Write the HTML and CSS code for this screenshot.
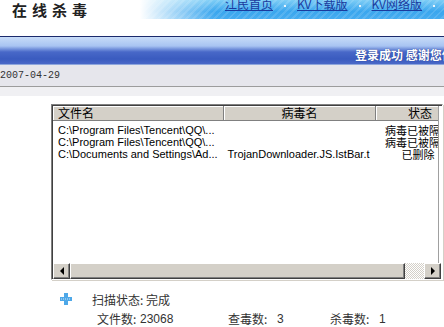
FILE: index.html
```html
<!DOCTYPE html>
<html lang="zh-CN">
<head>
    <meta charset="UTF-8">
    <meta name="viewport" content="width=device-width, initial-scale=1.0">
    <title>在线杀毒</title>
    <link rel="stylesheet" href="styles.css">
</head>
<body>
    <div class="top">
        <div class="logo">在线杀毒</div>
        <div class="nav">
            <a href="#">江民首页</a><span class="dot"></span>
            <a href="#">KV下载版</a><span class="dot"></span>
            <a href="#">KV网络版</a><span class="dot"></span>
        </div>
    </div>
    <div class="bar"><span class="welcome">登录成功 感谢您使用江民在线杀毒</span></div>
    <div class="date">2007-04-29</div>
    <div class="sub"></div>

    <div class="main">
        <div class="list">
            <div class="view">
                <div class="row head">
                    <div class="c1">文件名</div>
                    <div class="c2">病毒名</div>
                    <div class="c3">状态</div>
                </div>
                <div class="rows">
                    <div class="row">
                        <div class="c1">C:\Program Files\Tencent\QQ\...</div>
                        <div class="c2"></div>
                        <div class="c3">病毒已被隔离</div>
                    </div>
                    <div class="row">
                        <div class="c1">C:\Program Files\Tencent\QQ\...</div>
                        <div class="c2"></div>
                        <div class="c3">病毒已被隔离</div>
                    </div>
                    <div class="row">
                        <div class="c1">C:\Documents and Settings\Ad...</div>
                        <div class="c2">TrojanDownloader.JS.IstBar.t</div>
                        <div class="c3">已删除</div>
                    </div>
                </div>
            </div>
            <div class="hscroll">
                <div class="sbtn"><span class="arrow-left"></span></div>
                <div class="thumb"></div>
                <div class="track"></div>
                <div class="sbtn"><span class="arrow-right"></span></div>
            </div>
        </div>

        <div class="status">
            <div class="state">
                <svg class="plus" width="12" height="12" viewBox="0 0 12 12">
                    <path d="M4 0h4v4h4v4H8v4H4V8H0V4h4z" fill="#4ea8e8"/>
                    <path d="M1 6h10" stroke="#cfe6f8" stroke-width="1" stroke-dasharray="1 1"/>
                </svg>
                <span>扫描状态: 完成</span>
            </div>
            <div class="counts">
                <div class="count files"><span class="label">文件数:</span><span class="num">23068</span></div>
                <div class="count checked"><span class="label">查毒数:</span><span class="num">3</span></div>
                <div class="count killed"><span class="label">杀毒数:</span><span class="num">1</span></div>
            </div>
        </div>
    </div>
</body>
</html>
```

FILE: styles.css
```css
body {
    margin: 0;
    overflow: hidden;
    background: #fff;
    font-family: "Liberation Sans", "Noto Sans CJK SC", sans-serif;
    font-size: 12px;
    color: #000;
}

/* header */
.top {
    display: flex;
    height: 36px;
}
.logo {
    padding: 1px 0 0 12px;
    font-family: "Noto Sans CJK SC", sans-serif;
    font-size: 15px;
    font-weight: bold;
    letter-spacing: 5px;
    line-height: 18px;
    color: #222;
}
.nav {
    margin-left: auto;
    flex: none;
    width: 219px;
    height: 19px;
    padding-left: 85px;
    display: flex;
    align-items: flex-start;
    white-space: nowrap;
    overflow: hidden;
    background:
        linear-gradient(to right, #fff 0, rgba(255, 255, 255, 0) 75px),
        repeating-linear-gradient(135deg, rgba(255, 255, 255, 0.12) 0 2px, rgba(255, 255, 255, 0) 2px 5px),
        linear-gradient(to bottom, #7dcdf6, #3aa6ee 60%, #46acf0);
}
.nav a {
    flex: none;
    font-family: "Noto Sans CJK SC", sans-serif;
    font-size: 12px;
    line-height: 12px;
    margin-top: -2px;
    color: #1b3a9e;
    text-decoration: underline;
}
.dot {
    flex: none;
    width: 2px;
    height: 2px;
    margin: 5px 11px 0;
    background: #e8f4fc;
}

/* blue title bar */
.bar {
    height: 27px;
    border-top: 1px solid #1b2a6c;
    border-bottom: 1px solid #8ea6dc;
    background: linear-gradient(to bottom, #c8dcf8 0, #a8c4f2 9px, #7593dc 12px, #4868c8 15px, #3a5bbf 22px, #4a69c8 27px);
    display: flex;
    padding-left: 355px;
    overflow: hidden;
    white-space: nowrap;
}
.welcome {
    font-family: "Noto Sans CJK SC", sans-serif;
    font-weight: bold;
    font-size: 12px;
    line-height: 12px;
    margin-top: 12px;
    color: #fff;
    text-shadow: 0 0 1px #1c2f7a;
}

/* date strip */
.date {
    height: 21px;
    line-height: 22px;
    background: #e6e6ec;
    border-bottom: 1px solid #9c9c9c;
    font-family: "Liberation Mono", monospace;
    font-size: 10px;
    color: #333;
}
.sub {
    height: 9px;
    background: #f0f0f3;
}

/* list view */
.main {
    padding-top: 8px;
}
.list {
    margin-left: 51px;
    width: 389px;
    border-top: 1px solid #808080;
    border-left: 1px solid #808080;
    border-right: 1px solid #fff;
    border-bottom: 1px solid #fff;
    box-shadow: inset 1px 1px 0 #404040, 1px 1px 0 #d4d0c8;
    padding: 1px 0 0 1px;
}
.view {
    height: 157px;
    overflow: hidden;
    border-right: 1px solid #a0a0a0;
    margin-right: 3px;
    background: #fff;
}
.row {
    display: flex;
    height: 12px;
    line-height: 12px;
    white-space: nowrap;
}
.row > div {
    overflow: hidden;
    flex: none;
}
.c1 {
    width: 165px;
    padding-left: 5px;
    font-size: 11px;
}
.c2 {
    width: 151px;
    text-align: center;
    font-size: 11px;
}
.c3 {
    width: 88px;
    text-align: center;
    font-family: "Noto Sans CJK SC", sans-serif;
    font-size: 11px;
}
.row.head {
    height: 14px;
    line-height: 14px;
    background: #d4d0c8;
    border-bottom: 1px solid #808080;
    font-family: "Noto Sans CJK SC", sans-serif;
}
.row.head > div {
    font-size: 12px;
    border-right: 1px solid #808080;
    box-shadow: inset 1px 1px 0 #fff;
}
.rows {
    padding-top: 3px;
}

/* horizontal scrollbar */
.hscroll {
    display: flex;
    height: 16px;
}
.sbtn,
.thumb {
    background: #d4d0c8;
    border-top: 1px solid #fff;
    border-left: 1px solid #fff;
    border-right: 1px solid #404040;
    border-bottom: 1px solid #404040;
    box-shadow: inset -1px -1px 0 #808080;
    box-sizing: border-box;
    height: 16px;
}
.sbtn {
    width: 17px;
    display: flex;
    align-items: center;
    justify-content: center;
}
.thumb {
    width: 335px;
}
.track {
    width: 19px;
    background: repeating-conic-gradient(#fff 0 25%, #d4d0c8 0 50%) 0 0 / 2px 2px;
}
.arrow-left {
    border-top: 4px solid transparent;
    border-bottom: 4px solid transparent;
    border-right: 4px solid #000;
}
.arrow-right {
    border-top: 4px solid transparent;
    border-bottom: 4px solid transparent;
    border-left: 4px solid #000;
}

/* status */
.status {
    padding-top: 12px;
    font-family: "Noto Sans CJK SC", sans-serif;
    color: #333;
}
.state {
    display: flex;
    align-items: center;
    height: 14px;
    padding-left: 60px;
}
.plus {
    margin-right: 20px;
}
.counts {
    display: flex;
    margin-top: 6px;
    padding-left: 97px;
    height: 14px;
    line-height: 14px;
}
.count {
    display: flex;
}
.files {
    width: 131px;
}
.checked {
    width: 102px;
}
.label {
    width: 43px;
}
.checked .label,
.killed .label {
    width: 49px;
}
.num {
    font-family: "Liberation Sans", sans-serif;
}
```
